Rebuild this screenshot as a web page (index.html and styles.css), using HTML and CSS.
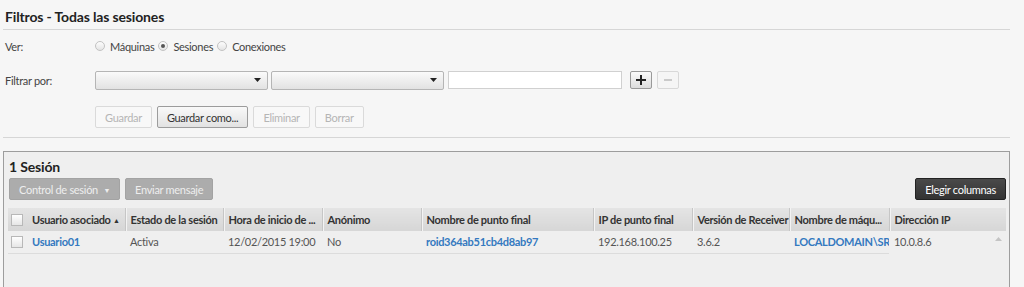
FILE: index.html
```html
<!DOCTYPE html>
<html lang="es">
<head>
    <meta charset="UTF-8">
    <title>Filtros - Todas las sesiones</title>
    <link rel="stylesheet" href="styles.css">
</head>
<body>
    <div class="page">
        <h1 class="title">Filtros - Todas las sesiones</h1>

        <div class="filters">
            <div class="row row-view">
                <span class="label">Ver:</span>
                <label class="radio"><input type="radio" name="ver"> Máquinas</label>
                <label class="radio"><input type="radio" name="ver" checked> Sesiones</label>
                <label class="radio"><input type="radio" name="ver"> Conexiones</label>
            </div>

            <div class="row row-filter">
                <span class="label">Filtrar por:</span>
                <span class="select">
                    <svg width="7" height="4" viewBox="0 0 7 4"><path d="M0 0h7L3.5 4z" fill="#222"/></svg>
                </span>
                <span class="select">
                    <svg width="7" height="4" viewBox="0 0 7 4"><path d="M0 0h7L3.5 4z" fill="#222"/></svg>
                </span>
                <input type="text" class="text-input">
                <button class="btn-icon">
                    <svg width="10" height="10" viewBox="0 0 10 10"><path d="M5 0v10M0 5h10" stroke="#222" stroke-width="2"/></svg>
                </button>
                <button class="btn-icon disabled">
                    <svg width="8" height="8" viewBox="0 0 8 8"><path d="M0 4h8" stroke="#bbb" stroke-width="1.5"/></svg>
                </button>
            </div>

            <div class="row row-actions">
                <button class="btn disabled">Guardar</button>
                <button class="btn">Guardar como...</button>
                <button class="btn disabled">Eliminar</button>
                <button class="btn disabled">Borrar</button>
            </div>
        </div>

        <div class="results">
            <h2 class="results-title">1 Sesión</h2>

            <div class="toolbar">
                <div class="toolbar-left">
                    <button class="btn-gray">Control de sesión <span class="caret">&#9660;</span></button>
                    <button class="btn-gray">Enviar mensaje</button>
                </div>
                <button class="btn-dark">Elegir columnas</button>
            </div>

            <div class="grid">
                <table class="sessions">
                    <colgroup>
                        <col style="width:19px">
                        <col style="width:98px">
                        <col style="width:98px">
                        <col style="width:99px">
                        <col style="width:99px">
                        <col style="width:172px">
                        <col style="width:99px">
                        <col style="width:97px">
                        <col style="width:100px">
                        <col>
                    </colgroup>
                    <thead>
                        <tr>
                            <th class="check-cell"><span class="checkbox"></span></th>
                            <th>Usuario asociado <span class="sort">&#9650;</span></th>
                            <th>Estado de la sesión</th>
                            <th>Hora de inicio de ...</th>
                            <th>Anónimo</th>
                            <th>Nombre de punto final</th>
                            <th>IP de punto final</th>
                            <th>Versión de Receiver</th>
                            <th>Nombre de máqu...</th>
                            <th>Dirección IP</th>
                        </tr>
                    </thead>
                    <tbody>
                        <tr>
                            <td class="check-cell"><span class="checkbox"></span></td>
                            <td><a class="link">Usuario01</a></td>
                            <td>Activa</td>
                            <td class="num">12/02/2015 19:00</td>
                            <td>No</td>
                            <td><a class="link">roid364ab51cb4d8ab97</a></td>
                            <td>192.168.100.25</td>
                            <td>3.6.2</td>
                            <td class="clip"><a class="link">LOCALDOMAIN\SRVDESK01</a></td>
                            <td>10.0.8.6</td>
                        </tr>
                    </tbody>
                </table>
                <div class="scrollbar">
                    <svg width="7" height="4" viewBox="0 0 7 4"><path d="M0 4h7L3.5 0z" fill="#c4c4c4"/></svg>
                </div>
            </div>
        </div>
    </div>
</body>
</html>
```

FILE: styles.css
```css
* {
    box-sizing: border-box;
    margin: 0;
    padding: 0;
}

body {
    background-color: #f6f6f6;
    color: #333;
    font-family: Lato, 'Open Sans', sans-serif;
    font-size: 11px;
    letter-spacing: -0.3px;
    overflow: hidden;
}

.page {
    width: 1007px;
    margin-left: 3px;
}

.title {
    height: 30px;
    padding: 8px 0 0 2px;
    font-size: 14px;
    font-weight: bold;
    letter-spacing: -0.15px;
    color: #222;
    border-bottom: 1px solid #d6d6d6;
}

.filters {
    padding: 7px 0 0 2px;
    height: 108px;
    border-bottom: 1px solid #d6d6d6;
}

.row {
    display: flex;
    align-items: center;
}

.label {
    width: 90px;
    color: #444;
}

.row-view {
    height: 18px;
}

.radio {
    display: flex;
    align-items: center;
    color: #444;
    margin-right: 4px;
}

.radio input {
    appearance: none;
    width: 10px;
    height: 10px;
    border-radius: 50%;
    border: 1px solid #c2c2c2;
    background: linear-gradient(#fdfdfd, #e4e4e4);
    margin-right: 5px;
    position: relative;
}

.radio input:checked::after {
    content: '';
    position: absolute;
    left: 2px;
    top: 2px;
    width: 4px;
    height: 4px;
    border-radius: 50%;
    background: #555;
}

.row-filter {
    margin-top: 16px;
    height: 18px;
}

.select {
    width: 173px;
    height: 19px;
    border: 1px solid #b5b5b5;
    border-radius: 2px;
    background: linear-gradient(#fafafa, #e2e2e2);
    display: flex;
    align-items: center;
    justify-content: flex-end;
    padding-right: 6px;
    margin-right: 3px;
}

.text-input {
    width: 174px;
    height: 18px;
    margin-left: 1px;
    border: 1px solid #d0d0d0;
    background: #fff;
    outline: none;
}

.btn-icon {
    width: 22px;
    height: 18px;
    margin-left: 8px;
    border: 1px solid #999;
    border-radius: 2px;
    background: linear-gradient(#fafafa, #dcdcdc);
    display: flex;
    align-items: center;
    justify-content: center;
}

.btn-icon.disabled {
    margin-left: 5px;
    border-color: #d8d8d8;
    background: #f5f5f5;
}

.row-actions {
    margin-top: 17px;
    padding-left: 90px;
    gap: 5px;
}

.btn {
    height: 22px;
    padding: 0 9px;
    font-family: inherit;
    font-size: 11px;
    letter-spacing: inherit;
    color: #333;
    border: 1px solid #9c9c9c;
    border-radius: 2px;
    background: linear-gradient(#f9f9f9, #e2e2e2);
}

.btn.disabled {
    color: #b5b5b5;
    border-color: #dadada;
    background: #f8f8f8;
}

.results {
    margin-top: 13px;
    height: 140px;
    border: 1px solid #9d9d9d;
    border-bottom: none;
    background: #efefef;
    padding: 0 3px 0 4px;
}

.results-title {
    padding: 6px 0 0 1px;
    height: 26px;
    font-size: 14px;
    font-weight: bold;
    letter-spacing: -0.15px;
    color: #222;
}

.toolbar {
    display: flex;
    justify-content: space-between;
    height: 22px;
}

.toolbar-left {
    display: flex;
    gap: 5px;
    padding-left: 1px;
}

.btn-gray,
.btn-dark {
    height: 22px;
    padding: 0 9px;
    font-family: inherit;
    font-size: 11px;
    letter-spacing: inherit;
    border-radius: 2px;
}

.btn-gray {
    color: #eee;
    border: 1px solid #a3a3a3;
    background: #acacac;
}

.caret {
    font-size: 7px;
    margin-left: 3px;
    vertical-align: 1px;
}

.btn-dark {
    color: #fff;
    border: 1px solid #222;
    background: linear-gradient(#4a4a4a, #333);
}

.grid {
    margin-top: 8px;
    position: relative;
}

.sessions {
    width: 998px;
    table-layout: fixed;
    border-collapse: collapse;
}

.sessions th {
    height: 23px;
    text-align: left;
    font-weight: bold;
    color: #333;
    padding: 0 5px;
    white-space: nowrap;
    overflow: hidden;
    background: linear-gradient(#e4e4e4, #d6d6d6);
    border-left: 1px solid #c6c6c6;
    box-shadow: inset 1px 0 #f3f3f3;
}

.sessions th:first-child,
.sessions th:nth-child(2) {
    border-left: none;
    box-shadow: none;
}

.sort {
    font-size: 7px;
    vertical-align: 1px;
}

.sessions td {
    height: 22px;
    padding: 0 5px;
    color: #555;
    white-space: nowrap;
    overflow: hidden;
    border-bottom: 1px solid #dcdcdc;
}

.sessions td:last-child {
    border-bottom-color: transparent;
}

.check-cell {
    padding: 0 0 0 3px !important;
}

.checkbox {
    display: block;
    width: 12px;
    height: 12px;
    border: 1px solid #b8b8b8;
    background: linear-gradient(#fff, #e6e6e6);
}

.sessions td.num {
    text-align: right;
    padding-right: 9px;
}

.link {
    color: #3479c0;
    font-weight: bold;
}

.clip {
    text-overflow: clip;
}

.scrollbar {
    position: absolute;
    right: 0;
    top: 23px;
    width: 16px;
    height: 60px;
    display: flex;
    justify-content: center;
    padding-top: 6px;
}
```
